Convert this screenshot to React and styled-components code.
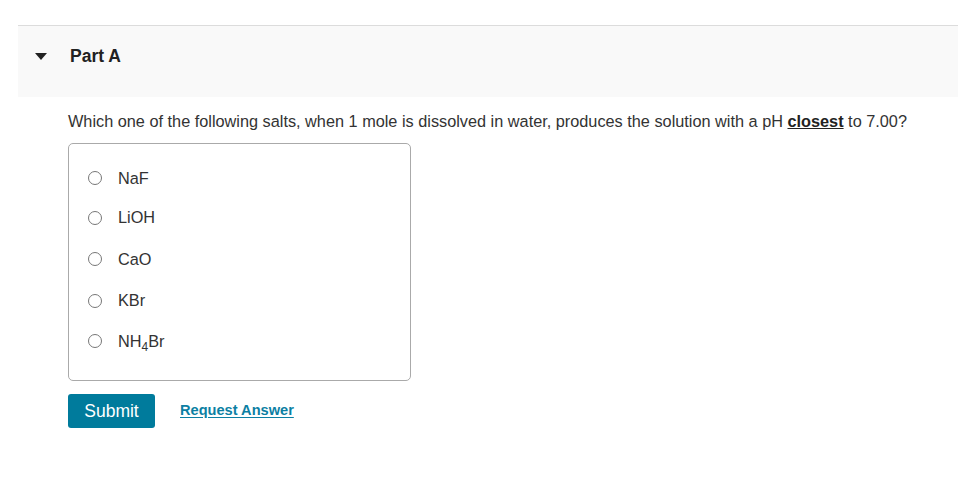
import React from "react";
import styled, { createGlobalStyle } from "styled-components";

const Global = createGlobalStyle`
  html, body { margin: 0; padding: 0; background: #fff; }
  body { font-family: "Liberation Sans", Arial, sans-serif; color: #333; }
`;

const Page = styled.div`
  padding: 25px 0 0 18px;
`;

const Header = styled.div`
  display: flex;
  align-items: center;
  height: 72px;
  border-top: 1px solid #dcdcdc;
  background: #f9f9f9;
  box-sizing: border-box;
  padding: 0 0 10px 17px;
`;

const Caret = styled.span`
  width: 0;
  height: 0;
  border-left: 6.5px solid transparent;
  border-right: 6.5px solid transparent;
  border-top: 7px solid #222;
  margin-right: 23px;
`;

const Title = styled.h2`
  margin: 0;
  font-size: 17.5px;
  font-weight: bold;
  color: #222;
`;

const Body = styled.div`
  padding: 14px 0 0 50px;
`;

const Question = styled.p`
  margin: 0;
  font-size: 16.3px;
  line-height: 20px;
  color: #333;
  b { font-weight: bold; text-decoration: underline; color: #222; }
`;

const Choices = styled.div`
  margin-top: 12px;
  width: 343px;
  height: 238px;
  box-sizing: border-box;
  border: 1px solid #aaa;
  border-radius: 5px;
  padding: 15px 0 0 19px;
  display: flex;
  flex-direction: column;
`;

const Row = styled.label`
  display: flex;
  align-items: center;
  height: ${(p) => p.h || 40}px;
  font-size: 16.3px;
  color: #333;
`;

const Radio = styled.span`
  width: 14px;
  height: 14px;
  box-sizing: border-box;
  border: 1.5px solid #777;
  border-radius: 50%;
  margin-right: 16px;
  flex: none;
`;

const Sub = styled.sub`
  font-size: 12px;
  vertical-align: -4px;
  line-height: 0;
`;

const Actions = styled.div`
  display: flex;
  align-items: center;
  margin-top: 13px;
  gap: 25px;
`;

const Submit = styled.button`
  width: 87px;
  height: 34px;
  border: none;
  border-radius: 3px;
  background: #007b9c;
  color: #fff;
  font-family: "Liberation Sans", Arial, sans-serif;
  font-size: 17.5px;
  padding: 0;
`;

const Link = styled.a`
  font-size: 14.6px;
  font-weight: bold;
  color: #0c7fa3;
  text-decoration: underline;
  text-underline-offset: 2px;
  margin-top: -2px;
`;

const options = [
  { label: "NaF", h: 38 },
  { label: "LiOH", h: 41 },
  { label: "CaO", h: 42 },
  { label: "KBr", h: 41 },
  { label: <>NH<Sub>4</Sub>Br</>, h: 40 },
];

export default function App() {
  return (
    <>
      <Global />
      <Page>
        <Header>
          <Caret />
          <Title>Part A</Title>
        </Header>
        <Body>
          <Question>
            Which one of the following salts, when 1 mole is dissolved in water, produces the solution with a pH <b>closest</b> to 7.00?
          </Question>
          <Choices>
            {options.map((o, i) => (
              <Row key={i} h={o.h}>
                <Radio />
                <span>{o.label}</span>
              </Row>
            ))}
          </Choices>
          <Actions>
            <Submit>Submit</Submit>
            <Link href="#">Request Answer</Link>
          </Actions>
        </Body>
      </Page>
    </>
  );
}
